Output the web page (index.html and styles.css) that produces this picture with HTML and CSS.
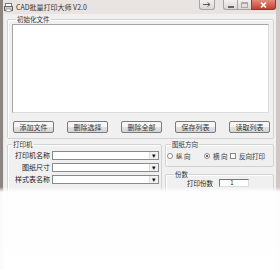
FILE: index.html
```html
<!DOCTYPE html>
<html lang="zh-CN">
<head>
  <meta charset="UTF-8">
  <title>CAD批量打印大师 V2.0</title>
  <link rel="stylesheet" href="styles.css">
</head>
<body>
  <div class="window">
    <div class="titlebar">
      <svg class="app-icon" width="9" height="9" viewBox="0 0 9 9">
        <rect x="1.5" y="0.5" width="6" height="3" fill="#fff" stroke="#777"/>
        <rect x="0.5" y="3.5" width="8" height="4" fill="#cfcfcf" stroke="#666"/>
        <rect x="2" y="6" width="5" height="2.5" fill="#fff" stroke="#777" stroke-width="0.6"/>
      </svg>
      <span class="title">CAD批量打印大师 V2.0</span>
      <div class="caption">
        <span class="cap-btn help">
          <svg width="8" height="5" viewBox="0 0 8 5"><path d="M0 2.5h7M4.5 0.5l2.5 2-2.5 2" fill="none" stroke="#555"/></svg>
        </span>
        <span class="cap-group">
          <span class="cap-btn min"><i></i></span>
          <span class="cap-btn max"><i></i></span>
          <span class="cap-btn close">
            <svg width="7" height="6" viewBox="0 0 7 6"><path d="M1 0.5l5 5M6 0.5l-5 5" stroke="#fff" stroke-width="1.6"/></svg>
          </span>
        </span>
      </div>
    </div>

    <div class="client">
      <fieldset class="group files">
        <legend>初始化文件</legend>
        <div class="listbox"></div>
        <div class="btn-row">
          <button>添加文件</button>
          <button>删除选择</button>
          <button>删除全部</button>
          <button>保存列表</button>
          <button>读取列表</button>
        </div>
      </fieldset>

      <div class="lower">
        <fieldset class="group printer">
          <legend>打印机</legend>
          <div class="field"><label>打印机名称</label><div class="combo"><span class="arrow">▾</span></div></div>
          <div class="field"><label>图纸尺寸</label><div class="combo"><span class="arrow">▾</span></div></div>
          <div class="field"><label>样式表名称</label><div class="combo"><span class="arrow">▾</span></div></div>
        </fieldset>

        <div class="side">
          <fieldset class="group orient">
            <legend>图纸方向</legend>
            <div class="opts">
              <span class="opt first"><i class="radio"></i>纵 向</span>
              <span class="opt second"><i class="radio on"></i>横 向</span>
              <span class="opt"><i class="check"></i>反向打印</span>
            </div>
          </fieldset>
          <fieldset class="group copies">
            <legend>份数</legend>
            <div class="copies-row"><span>打印份数</span><span class="num">1</span></div>
          </fieldset>
        </div>
      </div>
    </div>
  </div>
  <div class="fade"></div>
</body>
</html>
```

FILE: styles.css
```css
body{
  margin: 0;
  padding: 0;
  background: #8c8480;
  font-family: "Noto Sans CJK SC", "Noto Sans", sans-serif;
  font-size: 7px;
  color: #222;
  width: 280px;
  height: 270px;
  overflow: hidden;
  position: relative;
}

.window{
  margin-left: 3px;
  width: 273px;
  height: 300px;
  background: #e9e4e2;
  border-right: 4px solid #cfc8c5;
}

/* title bar */
.titlebar{
  height: 14px;
  display: flex;
  align-items: center;
  padding-left: 1px;
}
.app-icon{
  margin-right: 3px;
}
.title{
  font-size: 7px;
  color: #333;
  line-height: 10px;
}
.caption{
  margin-left: auto;
  display: flex;
  align-self: flex-start;
  gap: 8px;
}
.cap-btn{
  display: flex;
  align-items: center;
  justify-content: center;
  height: 9px;
  border: 1px solid #a9a3a0;
  border-top: none;
  background: linear-gradient(#f3f0ef, #dcd7d5);
}
.help{
  width: 14px;
  border-radius: 0 0 3px 3px;
}
.cap-group{
  display: flex;
}
.min, .max{
  width: 13px;
}
.min{
  border-radius: 0 0 0 3px;
  border-right: none;
}
.min i{
  width: 6px;
  height: 2px;
  margin-top: 4px;
  background: #666;
}
.max{
  border-right: none;
}
.max i{
  width: 5px;
  height: 3px;
  border: 1px solid #aaa;
  border-top-width: 2px;
}
.close{
  width: 23px;
  border-color: #8f3a30;
  border-radius: 0 0 3px 0;
  background: linear-gradient(#e58a7c, #c4402f);
}

/* client area */
.client{
  background: #f0f0f0;
  margin: 0 0 0 1px;
  padding: 1px 2px 0 3px;
  height: 280px;
}

.group{
  margin: 0;
  border: 1px solid #d2d2d2;
  border-radius: 2px;
  box-shadow: inset 1px 1px 0 #fff;
  padding: 0;
  min-width: 0;
}
.group legend{
  font-size: 6.5px;
  line-height: 8px;
  padding: 0 1px;
  margin-left: 4px;
  color: #333;
}

.files{
  padding: 0 4px 5px 4px;
}
.listbox{
  height: 87px;
  margin-top: 1px;
  background: #fff;
  border: 1px solid #a5a5a5;
  border-right-color: #dcdcdc;
  border-bottom-color: #dcdcdc;
}
.btn-row{
  display: flex;
  justify-content: space-between;
  padding: 8px 0 0 1px;
  margin-right: -1px;
}
.btn-row button{
  width: 41px;
  height: 12px;
  padding: 0;
  font-family: inherit;
  font-size: 7px;
  line-height: 10px;
  color: #333;
  border: 1px solid #7a7a7a;
  border-radius: 2px;
  background: linear-gradient(#f6f6f6 50%, #e2e2e2 50%, #d6d6d6);
}

.lower{
  display: flex;
  gap: 3px;
  margin-top: 1px;
}
.printer{
  width: 151px;
  padding: 0 2px 6px 0;
}
.field{
  display: flex;
  align-items: center;
  height: 9px;
  margin-top: 3px;
}
.field label{
  width: 42px;
  text-align: right;
  font-size: 7px;
  line-height: 9px;
  padding-right: 2px;
  overflow: hidden;
}
.combo{
  flex: 1;
  height: 7px;
  background: #fff;
  border: 1px solid #8a8a8a;
  display: flex;
  justify-content: flex-end;
  align-items: center;
}
.arrow{
  width: 8px;
  height: 7px;
  font-size: 7px;
  line-height: 7px;
  text-align: center;
  color: #111;
  background: #f2f2f2;
  border-left: 1px solid #ddd;
}

.side{
  flex: 1;
  display: flex;
  flex-direction: column;
  gap: 3px;
}
.orient{
  padding: 4px 2px 6px 1px;
}
.opts{
  display: flex;
  font-size: 6.5px;
  line-height: 8px;
  color: #333;
  white-space: nowrap;
}
.opt{
  display: flex;
  align-items: center;
  gap: 3px;
}
.opt.first{
  width: 37px;
}
.opt.second{
  width: 26px;
}
.radio{
  width: 4px;
  height: 4px;
  border: 1px solid #888;
  border-radius: 50%;
  background: #fff;
  box-sizing: content-box;
  position: relative;
}
.radio.on::after{
  content: "";
  position: absolute;
  left: 1px;
  top: 1px;
  width: 2px;
  height: 2px;
  border-radius: 50%;
  background: #333;
}
.check{
  width: 4px;
  height: 4px;
  border: 1px solid #888;
  background: #fff;
}
.copies{
  padding: 1px 4px 10px 4px;
}
.copies-row{
  display: flex;
  align-items: center;
  font-size: 6.5px;
  line-height: 8px;
  padding-left: 17px;
  gap: 6px;
}
.num{
  width: 24px;
  height: 6px;
  border: 1px solid #777;
  border-right-color: #ddd;
  border-bottom-color: #ddd;
  background: #fff;
  font-size: 6px;
  line-height: 6px;
  text-align: center;
  padding-right: 4px;
}

/* the lower part of the shot fades out */
.fade{
  position: absolute;
  left: 0;
  right: 0;
  top: 187px;
  bottom: 0;
  background: linear-gradient(rgba(255,255,255,0), rgba(255,255,255,0.96) 5px, rgba(255,255,255,0.97));
}
```
